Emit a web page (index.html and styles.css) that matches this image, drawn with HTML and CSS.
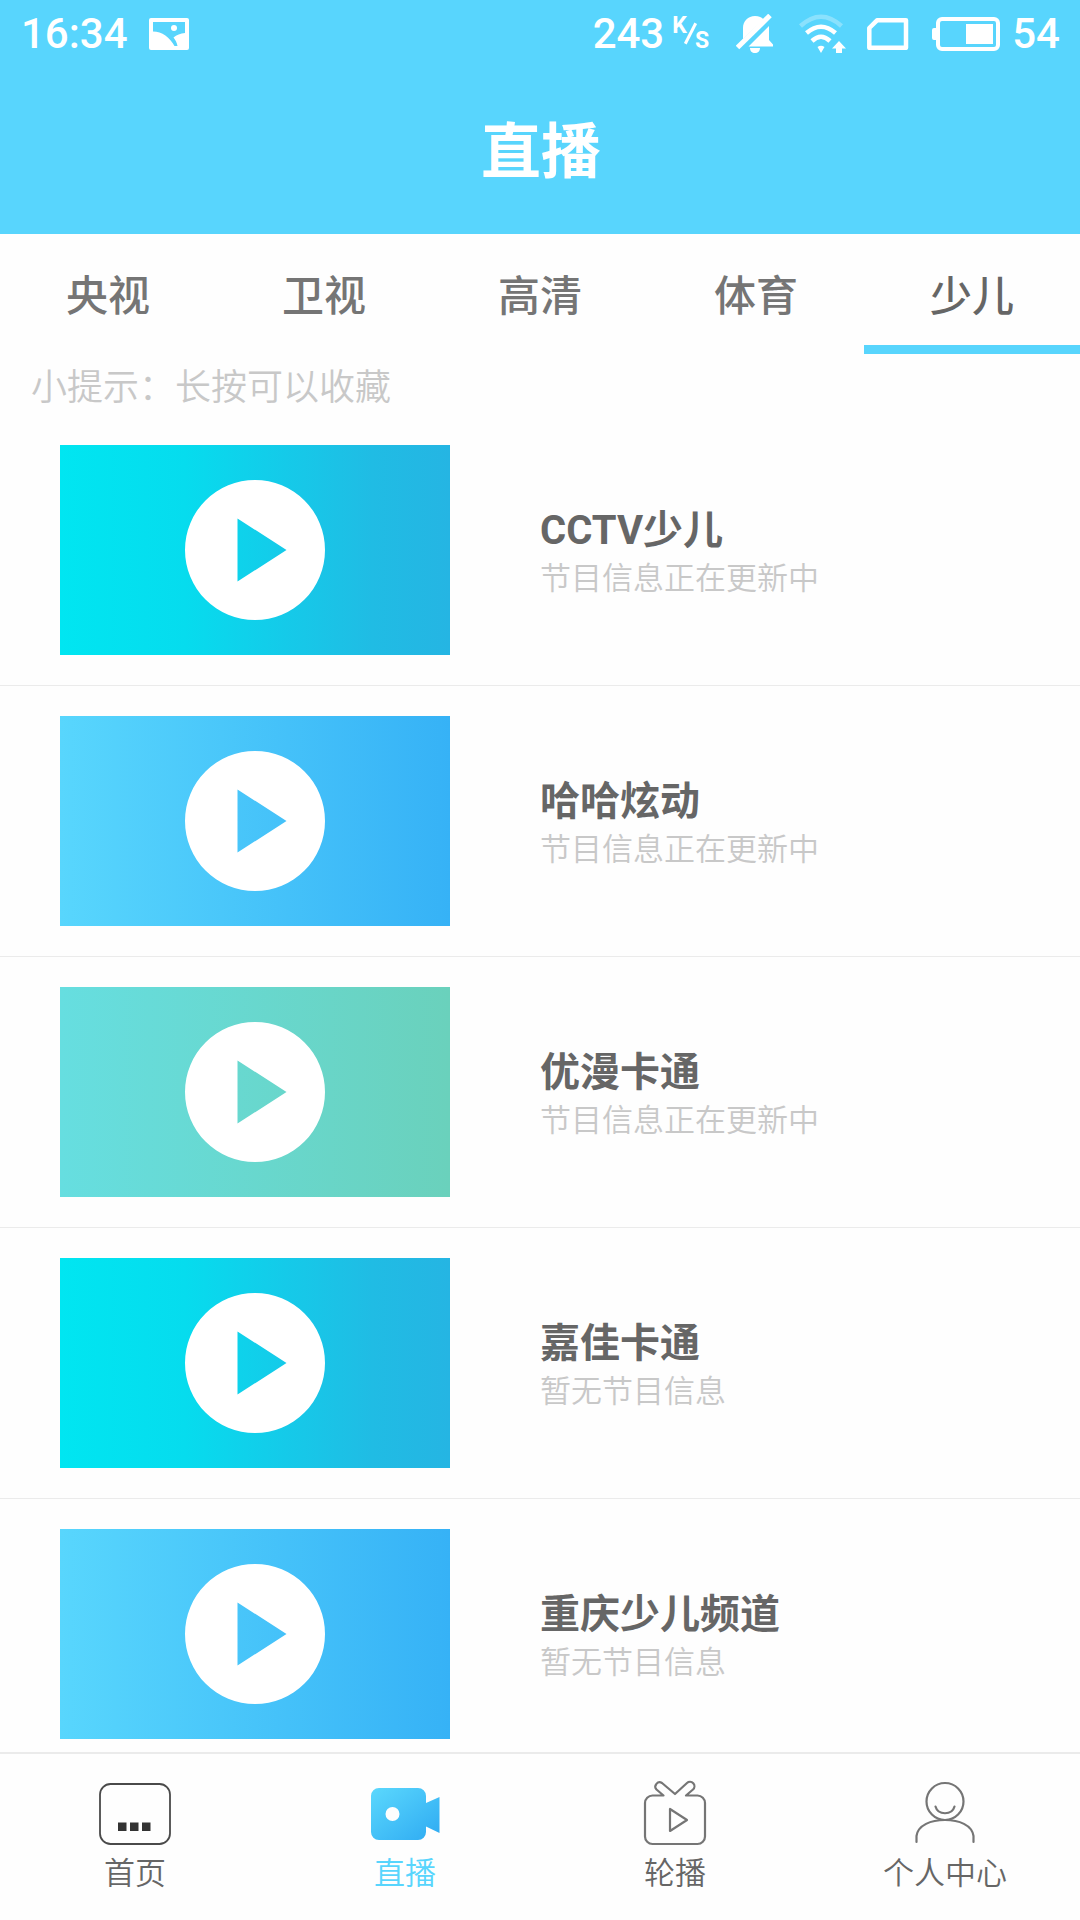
FILE: index.html
```
<!DOCTYPE html>
<html lang="zh-CN">

<head>
    <meta charset="UTF-8">
    <meta name="viewport" content="width=device-width, initial-scale=1.0">
    <title>直播</title>

    <link rel="stylesheet" href="styles.css">

</head>

<body>

    <!-- shared play button -->
    <svg class="sprite" width="0" height="0">
        <symbol id="play" viewBox="0 0 140 140">
            <path fill="#fff" fill-rule="evenodd" d="M70 0a70 70 0 1 1 0 140a70 70 0 1 1 0-140zM52.500 38.500v63L101.500 70z" />
        </symbol>
    </svg>

    <header class="header">
        <div class="status-bar">
            <span class="time">16:34</span>
            <svg class="icon-image" width="40" height="32" viewBox="0 0 40 32">
                <path fill="#fff" fill-rule="evenodd" d="M2 0h36a2 2 0 0 1 2 2v28a2 2 0 0 1-2 2h-36a2 2 0 0 1-2-2v-28a2 2 0 0 1 2-2zM4 4v9.500c9 0 17 6 21.500 14.500h3c-.5-3-2-6-4-8.500c3-2.500 7-4 11.500-4.500V4z" />
                <circle cx="25" cy="10" r="3" fill="#fff" />
            </svg>
            <span class="speed">243</span>
            <span class="unit"><i class="unit-k">K</i><i class="unit-slash"></i><i class="unit-s">S</i></span>
            <svg class="icon-bell" width="38" height="40" viewBox="0 0 38 40">
                <path fill="#fff" d="M7 25V14c0-7 5-12 12-12c4 0 7 1.500 8.500 3.500zM33 12v14l4 4.500v2H12.500zM14 34h10c0 3-2 5-5 5s-5-2-5-5z" />
                <path stroke="#fff" stroke-width="5" d="M1.500 33.500L34 1.500" />
            </svg>
            <svg class="icon-wifi" width="48" height="40" viewBox="0 0 48 40" fill="none" stroke="#fff" stroke-width="4.500">
                <path opacity=".3" d="M1.500 12Q22 -6.500 42.500 12" />
                <path d="M7.500 19Q22 6.500 36.500 19" />
                <path d="M13 27Q22 18.500 31 27" />
                <path fill="#fff" stroke="none" d="M18.500 33q3.500-2.500 7 0L22 39zM40 27l7 7.500h-4V39h-6v-4.500h-4z" />
            </svg>
            <svg class="icon-sim" width="42" height="32" viewBox="0 0 42 32">
                <path fill="none" stroke="#fff" stroke-width="4.500" stroke-linejoin="round" d="M10 2.300h29v27.500H2.300V10z" />
            </svg>
            <svg class="icon-battery" width="68" height="34" viewBox="0 0 68 34">
                <rect x="6" y="2" width="60" height="30" rx="4" fill="none" stroke="#fff" stroke-width="4" />
                <path fill="#fff" d="M0 13q0-2 2-2h3v12h-3q-2 0-2-2zM34 7h27v20h-27z" />
            </svg>
            <span class="level">54</span>
        </div>
        <h1 class="title">直播</h1>
    </header>

    <nav class="tabs">
        <a class="tab">央视</a>
        <a class="tab">卫视</a>
        <a class="tab">高清</a>
        <a class="tab">体育</a>
        <a class="tab active">少儿</a>
    </nav>

    <p class="hint">小提示：长按可以收藏</p>

    <main class="channel-list">
        <div class="channel">
            <div class="thumb cyan"><svg class="play"><use href="#play" /></svg></div>
            <div class="info">
                <h3>CCTV少儿</h3>
                <p>节目信息正在更新中</p>
            </div>
        </div>

        <div class="channel">
            <div class="thumb blue"><svg class="play"><use href="#play" /></svg></div>
            <div class="info">
                <h3>哈哈炫动</h3>
                <p>节目信息正在更新中</p>
            </div>
        </div>

        <div class="channel">
            <div class="thumb green"><svg class="play"><use href="#play" /></svg></div>
            <div class="info">
                <h3>优漫卡通</h3>
                <p>节目信息正在更新中</p>
            </div>
        </div>

        <div class="channel">
            <div class="thumb cyan"><svg class="play"><use href="#play" /></svg></div>
            <div class="info">
                <h3>嘉佳卡通</h3>
                <p>暂无节目信息</p>
            </div>
        </div>

        <div class="channel">
            <div class="thumb blue"><svg class="play"><use href="#play" /></svg></div>
            <div class="info">
                <h3>重庆少儿频道</h3>
                <p>暂无节目信息</p>
            </div>
        </div>
    </main>

    <footer class="bottom-nav">
        <a class="nav-item">
            <svg class="nav-icon" viewBox="0 0 80 80">
                <rect x="5" y="10" width="70" height="60" rx="10.500" fill="none" stroke="#4a4a4a" stroke-width="1.800" />
                <path fill="#333" d="M23 48.500h8.500v8.500h-8.500zM35 48.500h8.500v8.500h-8.500zM47 48.500h8.500v8.500h-8.500z" />
            </svg>
            <span>首页</span>
        </a>
        <a class="nav-item active">
            <svg class="nav-icon" viewBox="0 0 80 80">
                <defs>
                    <linearGradient id="camera" x1="0" y1="0" x2="1" y2="1">
                        <stop offset="0" stop-color="#5bd8fd" />
                        <stop offset="1" stop-color="#2eaaf2" />
                    </linearGradient>
                </defs>
                <path fill="url(#camera)" fill-rule="evenodd" d="M14 14h39a8 8 0 0 1 8 8v7L74.500 23v36L61 52.500V58a8 8 0 0 1-8 8h-39a8 8 0 0 1-8-8V22a8 8 0 0 1 8-8zM27.500 33a7 7 0 1 0 0 14a7 7 0 1 0 0-14z" />
            </svg>
            <span>直播</span>
        </a>
        <a class="nav-item">
            <svg class="nav-icon" viewBox="0 0 80 80" fill="none" stroke="#757575" stroke-width="2.200" stroke-linejoin="round">
                <path d="M28.500 21.500L21.500 15.500a4.300 4.300 0 0 1 5.500-6.500L40 20L52 9a4.300 4.300 0 0 1 6 6.500L51 21.500H62.500a7.500 7.500 0 0 1 7.500 7.500V62.500a7.500 7.500 0 0 1-7.500 7.500H17.500a7.500 7.500 0 0 1-7.500-7.500V29a7.500 7.500 0 0 1 7.500-7.500z" />
                <path d="M35 35v22L52 46z" />
            </svg>
            <span>轮播</span>
        </a>
        <a class="nav-item">
            <svg class="nav-icon" viewBox="0 0 80 80" fill="none" stroke="#757575" stroke-width="2.200" stroke-linecap="round">
                <circle cx="40" cy="27.500" r="18.500" />
                <path d="M30.500 32.500c2.500 9 16.500 9 19 0M11.500 68V62C13 51 26 46 40 46S67 51 68.500 62V68" />
            </svg>
            <span>个人中心</span>
        </a>
    </footer>

</body>

</html>
```
FILE: styles.css
```
* {
    box-sizing: border-box;
}

body {
    margin: 0;
    height: 1920px;
    display: flex;
    flex-direction: column;
    overflow: hidden;
    background-color: #fefefe;
    font-family: Roboto, "Noto Sans CJK SC", sans-serif;
}

h1, h3, p {
    margin: 0;
}

.sprite {
    position: absolute;
}

/* Header */
.header {
    height: 234px;
    background-color: #58d5fd;
    color: #fff;
}

.status-bar {
    display: flex;
    height: 67px;
    align-items: center;
    padding: 0 21px;
    font-size: 42px;
    font-weight: 500;
    line-height: 67px;
}

.icon-image {
    margin-left: 21px;
}

.speed {
    margin-left: auto;
}

.unit {
    display: flex;
    width: 38px;
    height: 34px;
    margin-left: 8px;
    font-size: 23px;
    font-weight: 700;
    line-height: 17px;
}

.unit i {
    font-style: normal;
}

.unit-slash {
    width: 3px;
    height: 23px;
    margin: 5px 3px 0 2px;
    background-color: #fff;
    transform: rotate(27deg);
}

.unit-s {
    padding-top: 15px;
}

.icon-bell {
    margin-left: 26px;
}

.icon-wifi {
    margin-left: 25px;
}

.icon-sim {
    margin-left: 20px;
}

.icon-battery {
    margin-left: 23px;
}

.level {
    margin-left: 12px;
    margin-right: -1px;
}

.title {
    padding-top: 41px;
    padding-left: 2px;
    font-size: 60px;
    font-weight: 700;
    line-height: 90px;
    text-align: center;
}

/* Tabs */
.tabs {
    display: flex;
    height: 120px;
}

.tab {
    flex: 1;
    border-bottom: 9px solid transparent;
    color: #757575;
    font-size: 42px;
    font-weight: 500;
    line-height: 126px;
    text-align: center;
}

.tab.active {
    border-color: #58d5fd;
    color: #666;
}

.hint {
    height: 61px;
    padding-left: 31px;
    color: #c8c8c8;
    font-size: 36px;
    font-weight: 350;
    line-height: 68px;
}

/* Channel list */
.channel-list {
    flex: 1;
    overflow: hidden;
}

.channel {
    display: flex;
    height: 271px;
    padding: 30px 60px;
    border-bottom: 1px solid #ebebeb;
}

.thumb {
    display: flex;
    width: 390px;
    height: 210px;
    align-items: center;
    justify-content: center;
}

.play {
    width: 140px;
    height: 140px;
}

.cyan {
    background: linear-gradient(to right, #00e6f1, #06dcee 32%, #15cae9 58%, #20bce4 80%, #25b5e3);
}

.blue {
    background: linear-gradient(to right, #58d6fd, #36b2f6);
}

.green {
    background: linear-gradient(to right, #66dee0, #6ad1bc);
}

.info {
    padding: 62px 0 0 90px;
}

.info h3 {
    color: #666;
    font-size: 40px;
    font-weight: 700;
    line-height: 48px;
}

.info p {
    color: #c8c8c8;
    font-size: 31px;
    font-weight: 350;
    line-height: 48px;
}

/* Bottom navigation */
.bottom-nav {
    display: flex;
    height: 168px;
    border-top: 2px solid #ebebeb;
    background-color: #fefefe;
}

.nav-item {
    display: flex;
    flex: 1;
    flex-direction: column;
    align-items: center;
    padding-top: 20px;
    color: #666;
    font-size: 31px;
    font-weight: 350;
    line-height: 40px;
}

.nav-item.active {
    color: #58d5fd;
}

.nav-icon {
    width: 80px;
    height: 80px;
}
```
